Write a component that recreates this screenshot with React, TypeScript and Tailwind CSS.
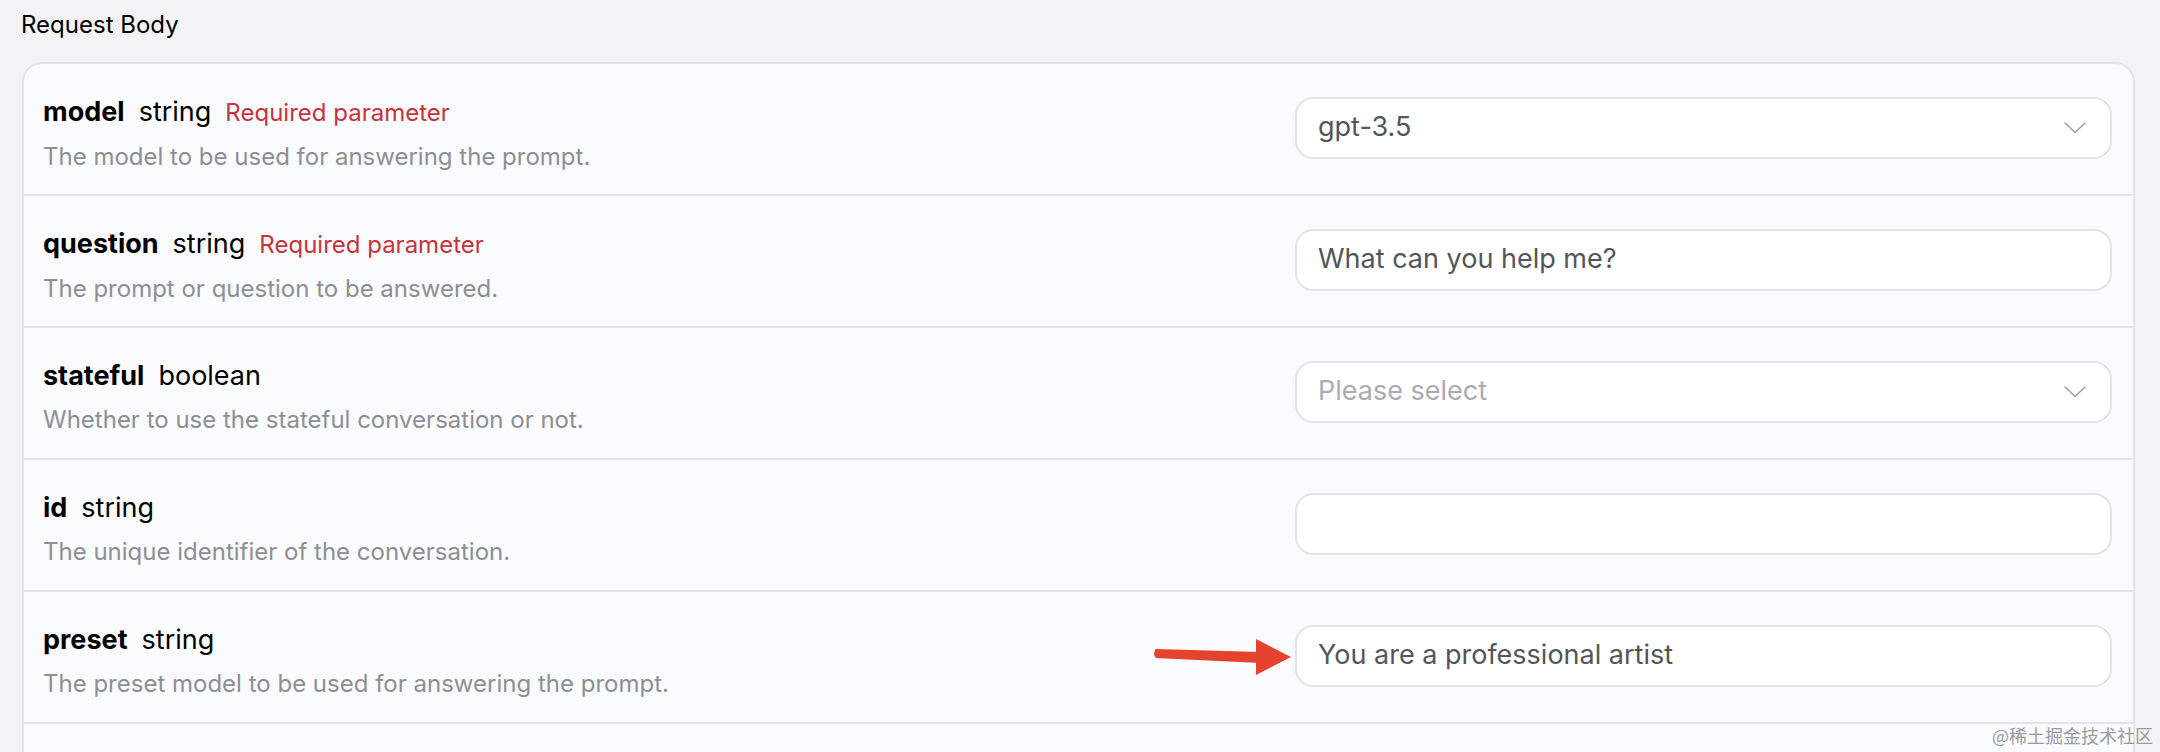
type Field = {
  name: string;
  type: string;
  required?: boolean;
  desc: string;
  kind: "select" | "input";
  value?: string;
  placeholder?: string;
};

const fields: Field[] = [
  {
    name: "model",
    type: "string",
    required: true,
    desc: "The model to be used for answering the prompt.",
    kind: "select",
    value: "gpt-3.5",
  },
  {
    name: "question",
    type: "string",
    required: true,
    desc: "The prompt or question to be answered.",
    kind: "input",
    value: "What can you help me?",
  },
  {
    name: "stateful",
    type: "boolean",
    desc: "Whether to use the stateful conversation or not.",
    kind: "select",
    placeholder: "Please select",
  },
  {
    name: "id",
    type: "string",
    desc: "The unique identifier of the conversation.",
    kind: "input",
  },
  {
    name: "preset",
    type: "string",
    desc: "The preset model to be used for answering the prompt.",
    kind: "input",
    value: "You are a professional artist",
  },
];

const Chevron = () => (
  <svg width="22" height="12" viewBox="0 0 22 12" fill="none">
    <path d="M1 1 L11 10.5 L21 1" stroke="#a3a3a8" strokeWidth="1.6" strokeLinecap="round" strokeLinejoin="round" />
  </svg>
);

const Control = ({ f }: { f: Field }) => (
  <div className="w-[817px] h-[62px] mb-[3px] shrink-0 rounded-[18px] border-2 border-[#e3e4e8] bg-white flex items-center justify-between pl-[21px] pr-[24px]">
    {f.value ? (
      <span className="text-[27px] text-[#555558]">{f.value}</span>
    ) : (
      <span className="text-[27px] text-[#ababaf]">{f.placeholder ?? ""}</span>
    )}
    {f.kind === "select" && <Chevron />}
  </div>
);

const Row = ({ f }: { f: Field }) => (
  <div className="h-[132px] border-b-2 border-[#e4e4e8] flex items-center justify-between pl-[19px] pr-[21px]">
    <div className="flex flex-col gap-[12px] pt-[8px]">
      <div className="flex items-baseline gap-[14px] leading-[34px]">
        <span className="text-[27px] font-bold text-black">{f.name}</span>
        <span className="text-[27px] text-black">{f.type}</span>
        {f.required && <span className="text-[24px] text-[#c8333a]">Required parameter</span>}
      </div>
      <div className="text-[24px] leading-[30px] text-[#8e8e93]">{f.desc}</div>
    </div>
    <Control f={f} />
  </div>
);

const App = () => {
  return (
    <main
      className="relative w-[2160px] h-[752px] overflow-hidden bg-[#f3f3f5]"
      style={{ fontFamily: "Inter, 'Noto Sans', sans-serif" }}
    >
      <h2 className="pt-[11px] pl-[21px] text-[24px] leading-[28px] text-black">Request Body</h2>
      <div className="mt-[23px] ml-[22px] w-[2113px] rounded-t-[20px] border-2 border-b-0 border-[#e4e4e8] bg-[#fafbfd]">
        {fields.map((f) => (
          <Row key={f.name} f={f} />
        ))}
        <div className="h-[132px]" />
      </div>

      {/* annotation arrow */}
      <svg className="absolute left-[1150px] top-[635px]" width="145" height="44" viewBox="0 0 145 44">
        <path d="M6 14 L110 17 L110 28 L6 23 Q2 18.5 6 14 Z" fill="#e5432d" />
        <path d="M106 4 L141 22 L106 40 Z" fill="#e5432d" />
      </svg>

      <div
        className="absolute right-[7px] bottom-[6px] text-[18px] leading-[22px] text-[#9a9aa0]"
        style={{ fontFamily: "'Noto Sans CJK SC', sans-serif" }}
      >
        @稀土掘金技术社区
      </div>
    </main>
  );
};

export default App;
